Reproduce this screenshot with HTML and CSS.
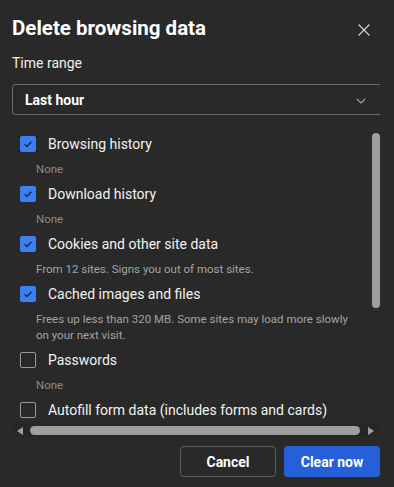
FILE: index.html
```html
<!DOCTYPE html>
<html>

<head>
    <meta charset="utf-8" />
    <meta name="viewport" content="width=device-width, initial-scale=1.0" />
    <title>Delete browsing data</title>
    <link rel="stylesheet" href="styles.css">
</head>

<body>
    <div class="dialog">
        <div class="dialog-header">
            <div class="dialog-title">Delete browsing data</div>
            <button class="close-btn" aria-label="Close">
                <svg width="12" height="12" viewBox="0 0 12 12">
                    <path d="M0.5 0.5 L11.5 11.5 M11.5 0.5 L0.5 11.5" stroke="#cfcfcf" stroke-width="1.2" fill="none" />
                </svg>
            </button>
        </div>

        <div class="field-title">Time range</div>
        <div class="select">
            <span class="select-value">Last hour</span>
            <svg class="select-arrow" width="10" height="6" viewBox="0 0 10 6">
                <path d="M0.8 0.8 L5 5 L9.2 0.8" stroke="#a8a8a8" stroke-width="1.2" fill="none" />
            </svg>
        </div>

        <div class="scroll-area">
            <div class="list">
                <div class="item">
                    <div class="item-row">
                        <span class="checkbox checked">
                            <svg width="16" height="16" viewBox="0 0 16 16">
                                <path d="M4.6 8.2 L7 10.5 L11.4 5.8" stroke="#1c2a44" stroke-width="1.5" fill="none" />
                            </svg>
                        </span>
                        <span class="item-label">Browsing history</span>
                    </div>
                    <div class="item-descr muted">None</div>
                </div>
                <div class="item">
                    <div class="item-row">
                        <span class="checkbox checked">
                            <svg width="16" height="16" viewBox="0 0 16 16">
                                <path d="M4.6 8.2 L7 10.5 L11.4 5.8" stroke="#1c2a44" stroke-width="1.5" fill="none" />
                            </svg>
                        </span>
                        <span class="item-label">Download history</span>
                    </div>
                    <div class="item-descr muted">None</div>
                </div>
                <div class="item">
                    <div class="item-row">
                        <span class="checkbox checked">
                            <svg width="16" height="16" viewBox="0 0 16 16">
                                <path d="M4.6 8.2 L7 10.5 L11.4 5.8" stroke="#1c2a44" stroke-width="1.5" fill="none" />
                            </svg>
                        </span>
                        <span class="item-label">Cookies and other site data</span>
                    </div>
                    <div class="item-descr">From 12 sites. Signs you out of most sites.</div>
                </div>
                <div class="item">
                    <div class="item-row">
                        <span class="checkbox checked">
                            <svg width="16" height="16" viewBox="0 0 16 16">
                                <path d="M4.6 8.2 L7 10.5 L11.4 5.8" stroke="#1c2a44" stroke-width="1.5" fill="none" />
                            </svg>
                        </span>
                        <span class="item-label">Cached images and files</span>
                    </div>
                    <div class="item-descr">Frees up less than 320 MB. Some sites may load more slowly on your next visit.</div>
                </div>
                <div class="item">
                    <div class="item-row">
                        <span class="checkbox"></span>
                        <span class="item-label">Passwords</span>
                    </div>
                    <div class="item-descr muted">None</div>
                </div>
                <div class="item">
                    <div class="item-row">
                        <span class="checkbox"></span>
                        <span class="item-label">Autofill form data (includes forms and cards)</span>
                    </div>
                </div>
            </div>
            <div class="vbar">
                <div class="vbar-thumb"></div>
            </div>
        </div>

        <div class="hbar">
            <span class="hbar-arrow left"></span>
            <div class="hbar-thumb"></div>
            <span class="hbar-arrow right"></span>
        </div>

        <div class="dialog-footer">
            <button class="btn btn-cancel">Cancel</button>
            <button class="btn btn-primary">Clear now</button>
        </div>
    </div>
</body>

</html>
```

FILE: styles.css
```css
/* Общие стили */
body {
    margin: 0;
    font-family: 'Segoe UI', Roboto, sans-serif;
    background-color: #292929;
    color: #ffffff;
}

.dialog {
    width: 368px;
    padding: 16px 0 0 12px;
}

.dialog-header {
    display: flex;
    justify-content: space-between;
    align-items: center;
    height: 24px;
}

.dialog-title {
    font-size: 20.5px;
    font-weight: 700;
    line-height: 24px;
}

.close-btn {
    background: none;
    border: none;
    padding: 0;
    margin: 4px 10px 0 0;
    width: 12px;
    height: 12px;
    display: flex;
}

.field-title {
    margin-top: 13px;
    font-size: 14px;
    line-height: 20px;
    color: #f0f0f0;
}

/* Выпадающий список */
.select {
    margin-top: 11px;
    height: 29px;
    border: 1px solid #6a6a6a;
    border-right: none;
    border-radius: 4px 0 0 4px;
    display: flex;
    align-items: center;
    justify-content: space-between;
    padding: 0 14px 0 12px;
}

.select-value {
    font-size: 14px;
    font-weight: 700;
}

.select-arrow {
    margin-top: 2px;
}

/* Список с прокруткой */
.scroll-area {
    margin-top: 12px;
    height: 297px;
    display: flex;
}

.list {
    flex: 1;
    overflow: hidden;
    padding-top: 5px;
}

.item {
    margin-bottom: 5px;
}

.item-row {
    display: flex;
    align-items: center;
    height: 24px;
    padding-left: 8px;
}

.checkbox {
    width: 16px;
    height: 16px;
    box-sizing: border-box;
    border: 1px solid #9a9a9a;
    border-radius: 2px;
    margin-right: 12px;
    flex-shrink: 0;
    display: flex;
}

.checkbox.checked {
    background-color: #3c7ff1;
    border: none;
}

.item-label {
    font-size: 14px;
    white-space: nowrap;
    color: #f2f2f2;
}

.item-descr {
    margin-top: 5px;
    padding: 0 14px 0 24px;
    font-size: 11.5px;
    line-height: 16px;
    color: #a3a3a3;
}

.item-descr.muted {
    color: #8a8a8a;
}

.vbar {
    width: 8px;
    padding-top: 6px;
}

.vbar-thumb {
    height: 175px;
    border-radius: 4px;
    background-color: #9e9e9e;
}

/* Горизонтальная полоса прокрутки */
.hbar {
    height: 13px;
    background-color: #262626;
    display: flex;
    align-items: center;
    padding: 0 6px 0 5px;
}

.hbar-arrow {
    width: 0;
    height: 0;
    border-top: 4px solid transparent;
    border-bottom: 4px solid transparent;
}

.hbar-arrow.left {
    border-right: 6px solid #a0a0a0;
}

.hbar-arrow.right {
    border-left: 6px solid #a0a0a0;
}

.hbar-thumb {
    flex: 1;
    height: 9px;
    border-radius: 5px;
    background-color: #9e9e9e;
    margin: 0 8px 0 7px;
}

/* Кнопки */
.dialog-footer {
    margin-top: 9px;
    display: flex;
    justify-content: flex-end;
    gap: 8px;
}

.btn {
    width: 96px;
    height: 31px;
    font-family: inherit;
    font-size: 14px;
    font-weight: 700;
    border-radius: 4px;
    cursor: pointer;
    color: #ffffff;
}

.btn-cancel {
    background-color: #292929;
    border: 1px solid #5e5e5e;
}

.btn-primary {
    background-color: #2560d8;
    border: none;
}
```
